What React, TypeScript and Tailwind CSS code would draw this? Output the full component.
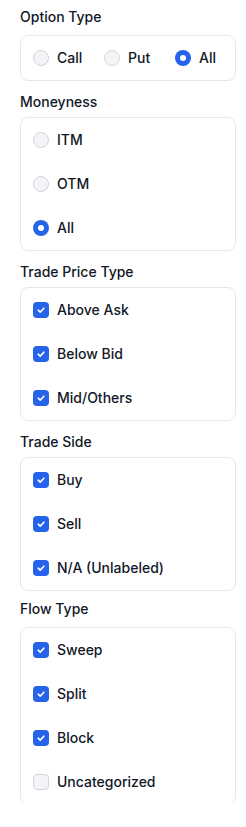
import { useState } from "react";

type Opt = { label: string; checked: boolean };

const Radio = ({ checked }: { checked: boolean }) =>
  checked ? (
    <span className="flex h-4 w-4 shrink-0 items-center justify-center rounded-full bg-[#2563eb]">
      <span className="h-1.5 w-1.5 rounded-full bg-white" />
    </span>
  ) : (
    <span className="h-4 w-4 shrink-0 rounded-full border border-[#d1d5db] bg-[#f3f4f6]" />
  );

const Checkbox = ({ checked }: { checked: boolean }) =>
  checked ? (
    <span className="flex h-4 w-4 shrink-0 items-center justify-center rounded-[4px] bg-[#2563eb]">
      <svg width="10" height="10" viewBox="0 0 10 10" fill="none">
        <path d="M2.2 5.2 4.2 7.1 7.9 3.2" stroke="white" strokeWidth="1.6" strokeLinecap="round" strokeLinejoin="round" />
      </svg>
    </span>
  ) : (
    <span className="h-4 w-4 shrink-0 rounded-[4px] border border-[#d1d5db] bg-[#f3f4f6]" />
  );

const Title = ({ children, className }: { children: string; className: string }) => (
  <p className={`text-sm leading-5 font-medium text-[#111827] ${className}`}>{children}</p>
);

const List = ({ items, kind }: { items: Opt[]; kind: "radio" | "check" }) => (
  <div className="rounded-lg border border-[#e5e7eb] bg-white">
    {items.map((it) => (
      <label key={it.label} className="flex h-11 items-center gap-2 px-3 text-sm font-medium text-[#111827]">
        {kind === "radio" ? <Radio checked={it.checked} /> : <Checkbox checked={it.checked} />}
        <span>{it.label}</span>
      </label>
    ))}
  </div>
);

export default function App() {
  const [optionType] = useState("All");
  const [moneyness] = useState("All");

  return (
    <div className="h-[803px] overflow-hidden bg-white" style={{ fontFamily: "Inter, 'Noto Sans', sans-serif" }}>
      <div className="flex flex-col pl-5 pr-[10px] pt-[7px]">
        <Title className="mb-2">Option Type</Title>
        <div className="flex h-[46px] items-center rounded-lg border border-[#e5e7eb] px-3 text-sm font-medium text-[#111827]">
          {["Call", "Put", "All"].map((o) => (
            <label key={o} className={`flex items-center gap-2 ${o === "All" ? "" : "w-[71px]"}`}>
              <Radio checked={optionType === o} />
              <span>{o}</span>
            </label>
          ))}
        </div>

        <Title className="mt-[11px] mb-[5px]">Moneyness</Title>
        <List
          kind="radio"
          items={["ITM", "OTM", "All"].map((l) => ({ label: l, checked: moneyness === l }))}
        />

        <Title className="mt-[11px] mb-[5px]">Trade Price Type</Title>
        <List
          kind="check"
          items={[
            { label: "Above Ask", checked: true },
            { label: "Below Bid", checked: true },
            { label: "Mid/Others", checked: true },
          ]}
        />

        <Title className="mt-[11px] mb-[5px]">Trade Side</Title>
        <List
          kind="check"
          items={[
            { label: "Buy", checked: true },
            { label: "Sell", checked: true },
            { label: "N/A (Unlabeled)", checked: true },
          ]}
        />

        <Title className="mt-2 mb-2">Flow Type</Title>
        <List
          kind="check"
          items={[
            { label: "Sweep", checked: true },
            { label: "Split", checked: true },
            { label: "Block", checked: true },
            { label: "Uncategorized", checked: false },
          ]}
        />
      </div>
    </div>
  );
}
